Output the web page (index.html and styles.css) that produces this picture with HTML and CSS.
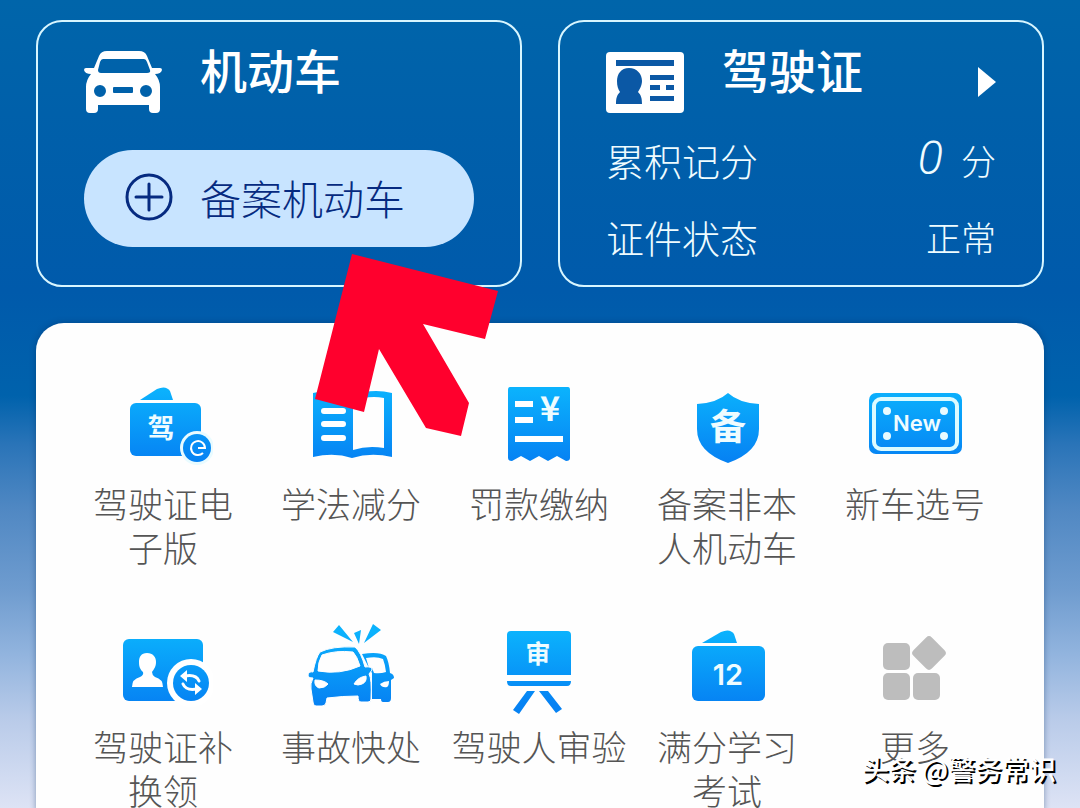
FILE: index.html
```html
<!DOCTYPE html>
<html lang="zh-CN">
<head>
<meta charset="utf-8">
<meta name="viewport" content="width=device-width, initial-scale=1">
<title>交管服务</title>
<link rel="stylesheet" href="styles.css">
</head>
<body>
<main class="screen">
  <div class="cards">
    <section class="card">
      <header class="card-head">
        <svg class="head-icon" viewBox="0 0 78 64" aria-hidden="true">
          <path fill="#fff" fill-rule="evenodd" d="M23 1H55Q61 1 63 6L68 18H76Q78 18 78 20Q77 24 71 24Q76 30 76 37V59Q76 63 72 63H69Q65 63 65 59V55H14V59Q14 63 10 63H6Q2 63 2 59V37Q2 30 7 24Q1 24 0 20Q0 18 2 18H10L15 6Q17 1 23 1ZM19 9Q17 9 16 12L14 20Q14 23 17 23H63Q67 23 66 20L63 12Q62 9 60 9ZM16 35A6 6 0 1 0 16 47A6 6 0 1 0 16 35ZM62 35A6 6 0 1 0 62 47A6 6 0 1 0 62 35ZM30 37Q29 37 29 38V42Q29 43 30 43H48Q49 43 49 42V38Q49 37 48 37Z"/>
        </svg>
        <h2 class="card-title">机动车</h2>
      </header>
      <button class="register" type="button">
        <svg class="plus" viewBox="0 0 48 48" aria-hidden="true" fill="none" stroke="#062a80" stroke-width="3">
          <circle cx="24" cy="24" r="22"/>
          <path d="M24 11V37M11 24H37" stroke-linecap="round"/>
        </svg>
        <span>备案机动车</span>
      </button>
    </section>

    <section class="card">
      <header class="card-head">
        <svg class="head-icon" viewBox="0 0 78 64" aria-hidden="true">
          <rect y="2" width="78" height="61" rx="4" fill="#fff"/>
          <g fill="#0b58a5">
            <path d="M10 10H68V16H10ZM44 25H68V30H44ZM44 35H54V40H44ZM60 35H68V40H60ZM44 46H68V51H44Z"/>
            <path d="M23 18C31 18 36 24 36 31C36 36 33 40 32 42C35 45 36 48 36 54H10C10 48 11 45 14 42C12 39 11 36 11 31C11 24 15 18 23 18Z"/>
          </g>
        </svg>
        <h2 class="card-title">驾驶证</h2>
        <a class="more" href="#" aria-label="查看驾驶证">
          <svg viewBox="0 0 18 30" width="18" height="30" aria-hidden="true"><path d="M0 0L18 15L0 30Z" fill="#fff"/></svg>
        </a>
      </header>
      <dl class="facts">
        <div class="fact"><dt>累积记分</dt><dd><span class="score">0</span><span class="unit">分</span></dd></div>
        <div class="fact"><dt>证件状态</dt><dd>正常</dd></div>
      </dl>
    </section>
  </div>

  <svg class="defs" width="0" height="0" aria-hidden="true">
    <linearGradient id="sky" gradientUnits="userSpaceOnUse" x1="0" y1="8" x2="0" y2="80">
      <stop offset="0" stop-color="#0bb2fd"/><stop offset="1" stop-color="#0682f3"/>
    </linearGradient>
  </svg>

  <nav class="services">
    <a class="service" href="#">
      <svg class="icon" viewBox="0 0 100 90" aria-hidden="true">
        <path fill="url(#sky)" d="M27 19L44 8Q53 4 57 10L60 19Z"/>
        <rect fill="url(#sky)" x="17" y="22" width="71" height="53" rx="6"/>
        <text class="glyph" x="48" y="57" font-size="27">驾</text>
        <circle cx="84" cy="67" r="17" fill="#e9fbff"/>
        <circle cx="84" cy="67" r="14" fill="url(#sky)"/>
        <path d="M85 67H92A7 7 0 1 0 90 72" fill="none" stroke="#fff" stroke-width="2"/>
      </svg>
      <span class="label">驾驶证电<br>子版</span>
    </a>
    <a class="service" href="#">
      <svg class="icon" viewBox="0 0 100 90" aria-hidden="true">
        <path fill="url(#sky)" fill-rule="evenodd" d="M12 12Q33 7 51 15Q70 7 91 12V76Q70 71 51 77Q33 71 12 76ZM52 21V69Q67 64 83 67V17Q66 14 52 21Z"/>
        <path d="M23 30H42M23 43H42M23 57H42" stroke="#fff" stroke-width="6" stroke-linecap="round"/>
      </svg>
      <span class="label">学法减分</span>
    </a>
    <a class="service" href="#">
      <svg class="icon" viewBox="0 0 100 90" aria-hidden="true">
        <path fill="url(#sky)" d="M21 6H79Q81 6 81 9V77Q81 80 77 80L68 75L59 80L50 75L41 80L32 75L23 80Q19 80 19 77V9Q19 6 21 6Z"/>
        <path d="M26 23H44M26 39H44M26 58H74" stroke="#fff" stroke-width="6"/>
        <text class="glyph" x="61" y="40" font-size="34">¥</text>
      </svg>
      <span class="label">罚款缴纳</span>
    </a>
    <a class="service" href="#">
      <svg class="icon" viewBox="0 0 100 90" aria-hidden="true">
        <path fill="url(#sky)" d="M51 12Q62 22 82 23V48Q82 71 51 82Q20 71 20 48V23Q40 22 51 12Z"/>
        <text class="glyph" x="51" y="59" font-size="36">备</text>
      </svg>
      <span class="label">备案非本<br>人机动车</span>
    </a>
    <a class="service" href="#">
      <svg class="icon" viewBox="0 0 100 90" aria-hidden="true">
        <rect fill="url(#sky)" x="4" y="12" width="93" height="61" rx="7"/>
        <rect fill="url(#sky)" x="9" y="18" width="83" height="50" rx="7" stroke="#dcfbff" stroke-width="4"/>
        <g fill="#e9fbff"><circle cx="22" cy="30" r="4"/><circle cx="79" cy="30" r="4"/><circle cx="22" cy="55" r="4"/><circle cx="79" cy="55" r="4"/></g>
        <text class="glyph latin" x="52" y="50" font-size="22">New</text>
      </svg>
      <span class="label">新车选号</span>
    </a>
    <a class="service" href="#">
      <svg class="icon" viewBox="0 0 100 90" aria-hidden="true">
        <rect fill="url(#sky)" x="10" y="15" width="80" height="62" rx="6"/>
        <path fill="#fff" d="M34 29C40 29 43 33 43 38C43 43 41 45 39 48Q39 51 42 53Q50 55 50 63H19Q19 55 27 53Q31 51 30 48C27 45 26 43 26 38C26 33 28 29 34 29Z"/>
        <circle cx="78" cy="59" r="24" fill="#fff"/>
        <circle cx="78" cy="59" r="18" fill="url(#sky)"/>
        <path fill="none" stroke="#fff" stroke-width="3" stroke-linecap="round" d="M72 52Q83 50 86 57M84 65Q73 67 70 60"/>
        <path fill="#fff" d="M67 52L74 46V58ZM89 65L82 59V71Z"/>
      </svg>
      <span class="label">驾驶证补<br>换领</span>
    </a>
    <a class="service" href="#">
      <svg class="icon" viewBox="0 0 100 90" aria-hidden="true">
        <g fill="url(#sky)">
          <path d="M32 8L38 1L52 18ZM53 9L60 6L58 20ZM72 0L80 6L63 19Z"/>
          <path fill-rule="evenodd" d="M61 30Q78 27 85 32Q88 38 89 49Q93 50 93 54L90 56V74Q90 78 87 78H82Q80 78 80 75H71V49L68 44ZM65 34Q76 32 82 35Q84 40 85 48Q79 50 73 49L71 44H68ZM79 60Q83 57 88 57Q88 62 86 63Q81 64 79 60Z"/>
          <path fill-rule="evenodd" stroke="#fff" stroke-width="1" d="M7 51Q8 47 12 48Q15 33 19 28Q31 22 54 23Q60 28 64 43Q71 42 71 46L68 50Q71 55 70 75Q70 78 67 78H60Q57 78 57 72Q42 72 26 74L25 79Q24 82 21 82H15Q12 82 12 78L10 65Q9 60 12 54Q7 54 7 51ZM21 31Q17 38 17 47Q39 51 59 42Q56 32 52 28Q35 26 21 31ZM14 56Q23 56 27 60Q24 64 18 64Q13 62 14 56ZM53 60Q57 53 65 52Q66 58 61 60Q57 62 53 60Z"/>
        </g>
      </svg>
      <span class="label">事故快处</span>
    </a>
    <a class="service" href="#">
      <svg class="icon" viewBox="0 0 100 90" aria-hidden="true">
        <path fill="url(#sky)" d="M22 7H78Q82 7 82 11V51H18V11Q18 7 22 7ZM18 57H82Q82 62 78 62H22Q18 62 18 57ZM38 67H46L30 90L24 86ZM50 67H59L73 85L67 89Z"/>
        <text class="glyph" x="49" y="39" font-size="25">审</text>
      </svg>
      <span class="label">驾驶人审验</span>
    </a>
    <a class="service" href="#">
      <svg class="icon" viewBox="0 0 100 90" aria-hidden="true">
        <path fill="url(#sky)" d="M25 19L44 8Q53 4 57 10L60 19Z"/>
        <rect fill="url(#sky)" x="15" y="22" width="73" height="55" rx="6"/>
        <text class="glyph latin" x="51" y="61" font-size="29">12</text>
      </svg>
      <span class="label">满分学习<br>考试</span>
    </a>
    <a class="service" href="#">
      <svg class="icon" viewBox="0 0 100 90" aria-hidden="true" fill="#bdbdbd">
        <rect x="18" y="19" width="27" height="27" rx="5"/>
        <rect x="18" y="49" width="27" height="27" rx="5"/>
        <rect x="48" y="49" width="27" height="27" rx="5"/>
        <rect x="51" y="16" width="26" height="26" rx="4" transform="rotate(45 64 29)"/>
      </svg>
      <span class="label">更多</span>
    </a>
  </nav>

  <svg class="pointer" viewBox="0 0 183 182" aria-hidden="true">
    <path fill="#ff002d" d="M37 0L183 37L170 85L108 70L154 149L146 182L111 174L64 95L49 158L0 145Z"/>
  </svg>
  <p class="watermark">头条 @警务常识</p>
</main>
</body>
</html>
```

FILE: styles.css
```css
* {
  box-sizing: border-box;
}

body {
  margin: 0;
  font-family: "STXingkai", "Noto Sans CJK SC", sans-serif;
  font-weight: 300;
}

h2, p, dl, dd {
  margin: 0;
}

.screen {
  position: relative;
  display: flex;
  flex-direction: column;
  gap: 36px;
  height: 100vh;
  padding: 20px 36px 0;
  overflow: hidden;
  background: linear-gradient(#0065aa 0%, #0060aa 14%, #005aab 36%, #0062ac 49%, #2a74b8 55%, #5088c3 63%, #6f9ccf 73%, #92b4de 81%, #b9cbe9 89%, #dde3f5 100%);
}

.cards {
  display: grid;
  grid-template-columns: 1fr 1fr;
  gap: 36px;
}

.card {
  padding: 28px 46px 24px;
  border: 2px solid #d8f6ff;
  border-radius: 26px;
  color: #effcff;
}

.card-head {
  display: flex;
  gap: 38px;
}

.head-icon {
  flex: none;
  width: 78px;
  height: 64px;
}

.card-title {
  font-size: 47px;
  line-height: 38px;
  font-weight: 500;
  color: #fff;
}

.more {
  display: flex;
  align-items: center;
  margin-left: auto;
}

.register {
  display: flex;
  align-items: center;
  gap: 27px;
  width: 100%;
  height: 97px;
  margin-top: 36px;
  padding: 0 41px 4px;
  border: 0;
  border-radius: 49px;
  background: #c8e4ff;
  color: #062a80;
  font: inherit;
  font-size: 41px;
  line-height: 48px;
  white-space: nowrap;
}

.plus {
  flex: none;
  width: 48px;
  height: 48px;
}

.facts {
  display: grid;
  gap: 29px;
  margin-top: 22px;
}

.fact {
  display: flex;
  justify-content: space-between;
  font-size: 38px;
  line-height: 48px;
}

.fact dd {
  display: flex;
  gap: 18px;
  font-size: 35px;
}

.score {
  font-family: "Roboto", "Open Sans", sans-serif;
  font-size: 47px;
  line-height: 44px;
  font-style: italic;
}

.defs {
  position: absolute;
}

.services {
  display: grid;
  flex: 1 0 auto;
  grid-template-columns: repeat(5, 1fr);
  grid-auto-rows: 188px;
  row-gap: 55px;
  padding: 58px 35px 0 33px;
  border-radius: 28px 28px 0 0;
  background: #fefefe;
  box-shadow: 0 0 6px rgba(0, 40, 90, 0.4);
}

.service {
  display: flex;
  flex-direction: column;
  align-items: center;
  gap: 10px;
  color: #555;
  text-decoration: none;
}

.icon {
  flex: none;
  width: 100px;
  height: 90px;
}

.glyph {
  fill: #effcff;
  font-family: "Noto Sans CJK SC", sans-serif;
  font-weight: 700;
  text-anchor: middle;
}

.latin {
  font-family: "Inter", "Liberation Sans", sans-serif;
  font-weight: 600;
}

.label {
  font-size: 35px;
  line-height: 44px;
  text-align: center;
  white-space: nowrap;
}

.pointer {
  position: absolute;
  top: 254px;
  left: 315px;
  width: 183px;
  height: 182px;
}

.watermark {
  position: absolute;
  right: 24px;
  bottom: 21px;
  color: #fff;
  font-size: 27px;
  line-height: 36px;
  font-weight: 500;
  text-shadow: 2px 2px 0 #000;
}
```
